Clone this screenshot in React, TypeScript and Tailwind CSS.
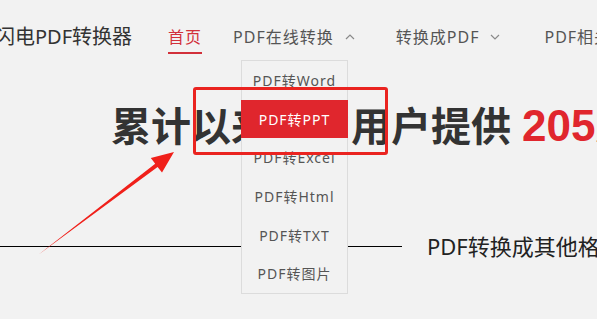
import React from "react";

const font = { fontFamily: '"Noto Sans", "Noto Sans CJK SC", sans-serif' };

function Chevron({ up }: { up?: boolean }) {
  return (
    <svg width="10" height="6" viewBox="0 0 10 6" className="ml-[11px] shrink-0">
      <polyline
        points={up ? "1,5 5,1 9,5" : "1,1 5,5 9,1"}
        fill="none"
        stroke="#8a8a8a"
        strokeWidth="1.2"
      />
    </svg>
  );
}

const items = ["PDF转Word", "PDF转PPT", "PDF转Excel", "PDF转Html", "PDF转TXT", "PDF转图片"];

export default function App() {
  return (
    <div
      className="relative w-[597px] h-[319px] overflow-hidden bg-[#f2f2f2]"
      style={font}
    >
      {/* header */}
      <div className="flex items-start h-[56px] pt-[26px] whitespace-nowrap">
        <div className="shrink-0 ml-[-5px] text-[20px] leading-[22px] text-[#333]">闪电PDF转换器</div>
        <div className="shrink-0 ml-[36px] text-[16px] leading-[22px] text-[#d2303a] tracking-[1px] pb-[4px] border-b-2 border-[#d2303a]">
          首页
        </div>
        <div className="shrink-0 ml-[31px] flex items-center text-[16px] leading-[22px] text-[#555] tracking-[1px]">
          PDF在线转换
          <Chevron up />
        </div>
        <div className="shrink-0 ml-[41px] flex items-center text-[16px] leading-[22px] text-[#555] tracking-[1px]">
          转换成PDF
          <Chevron />
        </div>
        <div className="shrink-0 ml-[44px] text-[16px] leading-[22px] text-[#555] tracking-[1px]">PDF相关</div>
      </div>

      {/* heading */}
      <div className="mt-[46px] pl-[111px] flex items-center whitespace-nowrap font-bold text-[#333]">
        <span className="shrink-0 text-[40px] leading-[48px]">累计以来已为用户提供</span>
        <span
          className="shrink-0 ml-[11px] text-[44px] leading-[48px] text-[#e0262d]"
          style={{ fontFamily: '"Liberation Sans", "Noto Sans CJK SC", sans-serif' }}
        >
          205万+
        </span>
      </div>

      {/* line row */}
      <div className="mt-[80px] flex items-center h-[32px] whitespace-nowrap">
        <div className="shrink-0 w-[402px] h-px bg-black" />
        <div className="shrink-0 ml-[25px] text-[22px] leading-[32px] text-[#222]">PDF转换成其他格式</div>
      </div>

      {/* dropdown */}
      <div className="absolute left-[241px] top-[60px] w-[107px] h-[234px] border border-[#dcdcdc] bg-[#f2f2f2] flex flex-col">
        {items.map((t, i) => (
          <div
            key={t}
            className={
              i === 1
                ? "h-[39px] -mx-px flex items-center justify-center bg-[#e0262d] text-white text-[14px] tracking-[1px]"
                : "h-[39px] flex items-center justify-center text-[#555] text-[14px] tracking-[1px]"
            }
          >
            {t}
          </div>
        ))}
      </div>

      {/* annotation rectangle */}
      <div className="absolute left-[193px] top-[87px] w-[195px] h-[68px] border-[3px] border-[#ea2420] rounded-[3px]" />

      {/* arrow */}
      <svg className="absolute left-0 top-0" width="597" height="319" viewBox="0 0 597 319">
        <polygon
          points="38,255 155.2,163.7 150.8,157.9 174,152 162,172.5 157.6,166.9"
          fill="#f0201a"
        />
      </svg>
    </div>
  );
}
